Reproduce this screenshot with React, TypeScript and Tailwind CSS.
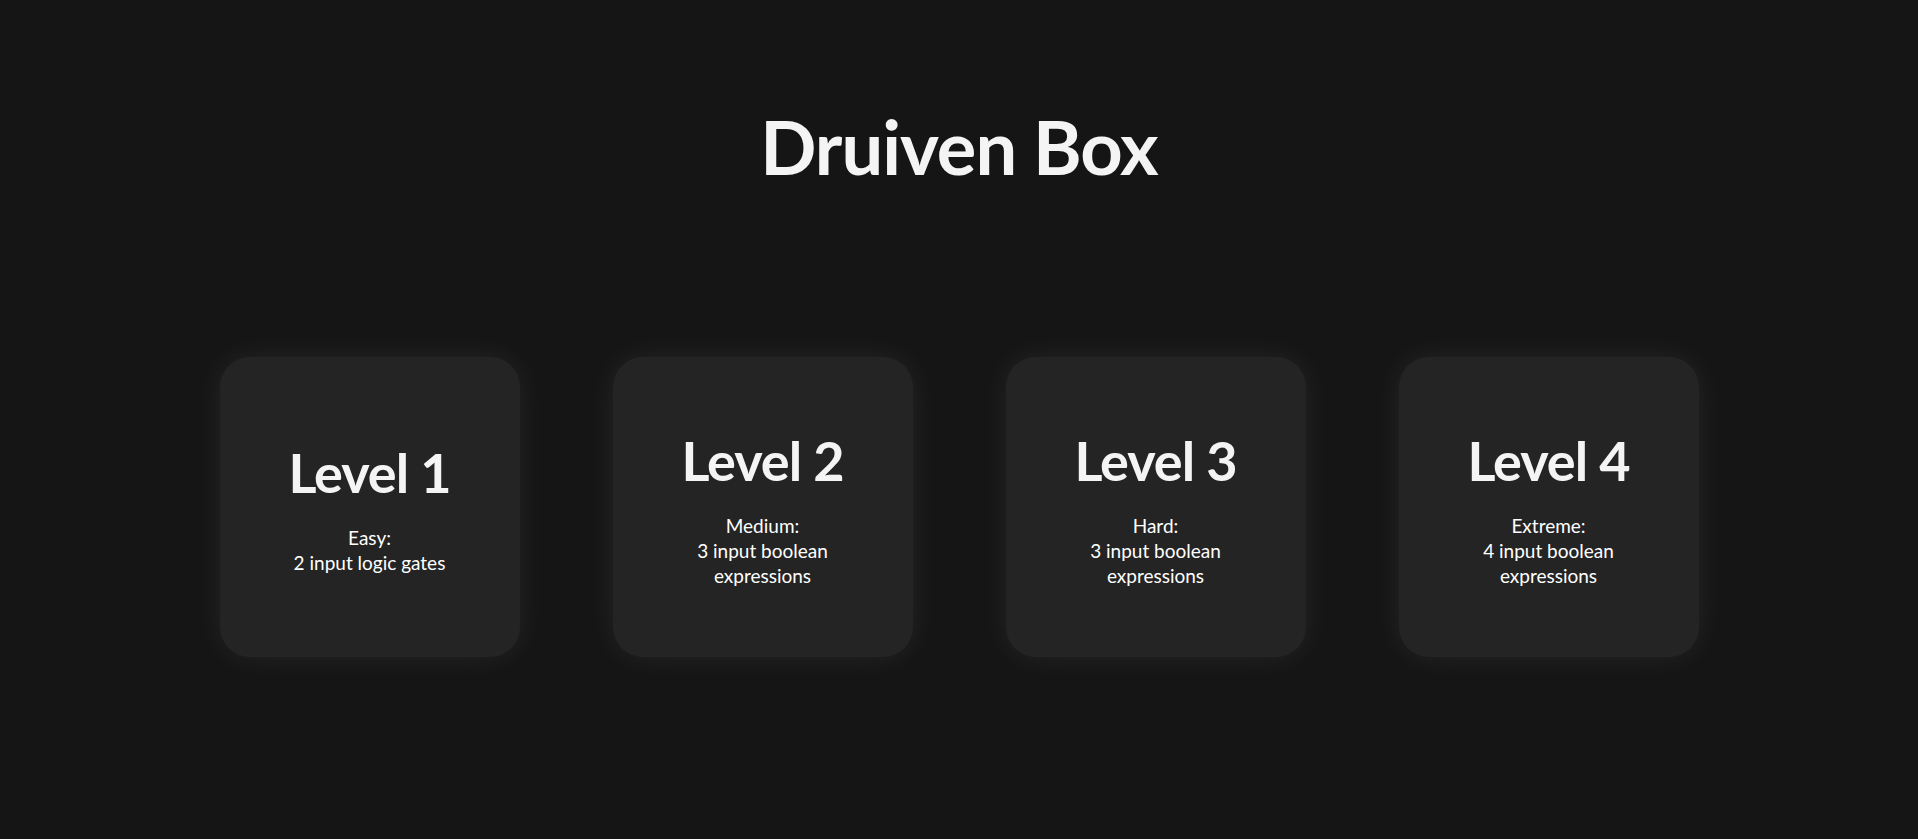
import React from 'react';

const levels = [
  { title: 'Level 1', label: 'Easy:', desc: '2 input logic gates' },
  { title: 'Level 2', label: 'Medium:', desc: '3 input boolean expressions' },
  { title: 'Level 3', label: 'Hard:', desc: '3 input boolean expressions' },
  { title: 'Level 4', label: 'Extreme:', desc: '4 input boolean expressions' },
];

export default function App() {
  return (
    <div
      className="min-h-[839px] w-full bg-[#151515] text-[#f4f4f4] flex flex-col items-center"
      style={{ fontFamily: 'Lato, "Noto Sans", sans-serif' }}
    >
      <h1 className="mt-[103px] text-[74px] leading-[88px] font-bold tracking-[-1px]">Druiven Box</h1>

      <div className="mt-[166px] flex justify-center gap-[93px]">
        {levels.map(level => (
          <div
            key={level.title}
            className="w-[300px] h-[300px] rounded-[30px] bg-[#242424] shadow-[0_0_30px_rgba(255,255,255,0.07)] flex flex-col items-center justify-center cursor-pointer"
          >
            <h2 className="mt-[4px] text-[54px] leading-[60px] font-bold tracking-[-1px]">{level.title}</h2>
            <p className="mt-[22px] w-[200px] text-center text-[19px] leading-[25px] text-white">
              {level.label}
              <br />
              {level.desc}
            </p>
          </div>
        ))}
      </div>
    </div>
  );
}
